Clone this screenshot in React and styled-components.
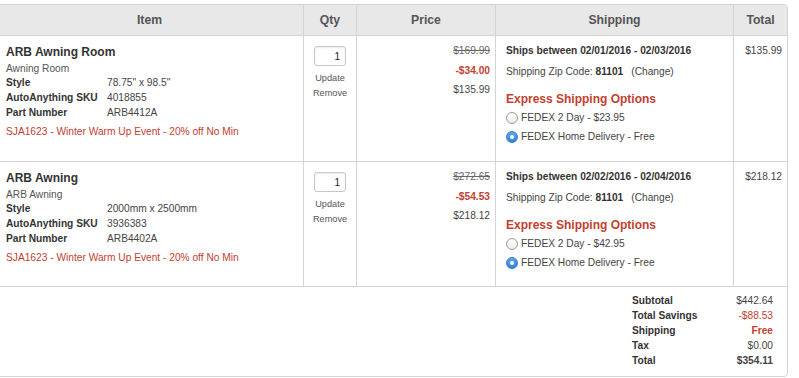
import React from "react";
import styled, { createGlobalStyle } from "styled-components";

const Global = createGlobalStyle`
  html, body { margin: 0; padding: 0; background: #fff; }
  body { font-family: "Liberation Sans", Arial, Helvetica, sans-serif; color: #333; }
  * { box-sizing: border-box; }
`;

const RED = "#c4402f";
const LINE = "#d4d4d4";

const Table = styled.div`
  margin: 4px 0 0 -5px;
  width: 793px;
  border: 1px solid ${LINE};
  border-radius: 4px;
  overflow: hidden;
  display: grid;
  grid-template-columns: 308px 53px 139px 238px 53px;
  grid-template-rows: 31px 126px 125px auto;
`;

const HeadCell = styled.div`
  background: #e8e8e8;
  border-bottom: 1px solid ${LINE};
  border-right: ${(p) => (p.$last ? "none" : `1px solid ${LINE}`)};
  display: flex;
  align-items: center;
  justify-content: center;
  font-size: 12.2px;
  font-weight: bold;
  color: #555;
  padding-bottom: 1px;
`;

const Cell = styled.div`
  border-bottom: 1px solid ${LINE};
  border-right: ${(p) => (p.$last ? "none" : `1px solid ${LINE}`)};
  padding: ${(p) => p.$pad || "7px 10px"};
  text-align: ${(p) => p.$align || "left"};
  font-size: 10.2px;
`;

const Title = styled.div`
  font-size: 12px;
  font-weight: bold;
  line-height: 18.5px;
  color: #333;
`;

const Sub = styled.div`
  line-height: 14.7px;
  color: #555;
`;

const Specs = styled.div`
  display: grid;
  grid-template-columns: 101px auto;
  line-height: 14.7px;
`;

const SpecLabel = styled.span`
  font-weight: bold;
  color: #333;
`;

const SpecValue = styled.span`
  color: #444;
`;

const Promo = styled.div`
  margin-top: 3.5px;
  line-height: 15px;
  color: ${RED};
`;

const QtyInput = styled.div`
  margin: 0 auto;
  width: 32px;
  height: 20px;
  border: 1px solid #c8c8c8;
  border-radius: 3px;
  box-shadow: inset 0 1px 2px rgba(0, 0, 0, 0.08);
  font-size: 10px;
  color: #222;
  display: flex;
  align-items: center;
  justify-content: flex-end;
  padding-right: 5px;
`;

const QtyLinks = styled.div`
  margin-top: 5px;
  font-size: 9.2px;
  line-height: 15px;
  color: #555;
  text-align: center;
`;

const PriceLine = styled.div`
  line-height: 19.5px;
  color: ${(p) => (p.$red ? RED : p.$old ? "#666" : "#444")};
  font-weight: ${(p) => (p.$red ? "bold" : "normal")};
  text-decoration: ${(p) => (p.$old ? "line-through" : "none")};
`;

const ShipDates = styled.div`
  font-weight: bold;
  line-height: 16px;
  color: #333;
`;

const Zip = styled.div`
  margin-top: 5px;
  line-height: 16px;
  color: #444;
  b { color: #333; margin-right: 8px; }
`;

const Express = styled.div`
  margin-top: 10px;
  font-size: 12px;
  font-weight: bold;
  line-height: 18px;
  color: ${RED};
`;

const RadioRow = styled.div`
  display: flex;
  align-items: center;
  gap: 3px;
  line-height: 19px;
  color: #444;
`;

const Radio = styled.span`
  width: 12px;
  height: 12px;
  border-radius: 50%;
  flex: none;
  position: relative;
  border: 1px solid ${(p) => (p.$on ? "#2f7fd8" : "#9a9a9a")};
  background: ${(p) =>
    p.$on ? "linear-gradient(#5aa6f0, #2f84dc)" : "linear-gradient(#ffffff, #ececec)"};
  &::after {
    content: "";
    display: ${(p) => (p.$on ? "block" : "none")};
    position: absolute;
    left: 3px;
    top: 3px;
    width: 4px;
    height: 4px;
    border-radius: 50%;
    background: #fff;
  }
`;

const TotalText = styled.div`
  line-height: 16px;
  color: #444;
`;

const Summary = styled.div`
  grid-column: 1 / -1;
  display: flex;
  justify-content: flex-end;
  padding: 6px 14px 8px 0;
`;

const SumGrid = styled.div`
  display: grid;
  grid-template-columns: 100px 41px;
  font-size: 10.2px;
  line-height: 15px;
`;

const SumLabel = styled.span`
  font-weight: bold;
  color: #333;
`;

const SumValue = styled.span`
  text-align: right;
  color: ${(p) => (p.$red ? RED : "#444")};
  font-weight: ${(p) => (p.$bold ? "bold" : "normal")};
`;

const items = [
  {
    title: "ARB Awning Room",
    sub: "Awning Room",
    style: '78.75" x 98.5"',
    sku: "4018855",
    part: "ARB4412A",
    old: "$169.99",
    save: "-$34.00",
    price: "$135.99",
    dates: "Ships between 02/01/2016 - 02/03/2016",
    twoDay: "$23.95",
    total: "$135.99",
  },
  {
    title: "ARB Awning",
    sub: "ARB Awning",
    style: "2000mm x 2500mm",
    sku: "3936383",
    part: "ARB4402A",
    old: "$272.65",
    save: "-$54.53",
    price: "$218.12",
    dates: "Ships between 02/02/2016 - 02/04/2016",
    twoDay: "$42.95",
    total: "$218.12",
  },
];

function ItemRow({ it }) {
  return (
    <>
      <Cell $pad="7px 10px">
        <Title>{it.title}</Title>
        <Sub>{it.sub}</Sub>
        <Specs>
          <SpecLabel>Style</SpecLabel>
          <SpecValue>{it.style}</SpecValue>
          <SpecLabel>AutoAnything SKU</SpecLabel>
          <SpecValue>{it.sku}</SpecValue>
          <SpecLabel>Part Number</SpecLabel>
          <SpecValue>{it.part}</SpecValue>
        </Specs>
        <Promo>SJA1623 - Winter Warm Up Event - 20% off No Min</Promo>
      </Cell>
      <Cell $pad="10px 0 0">
        <QtyInput>1</QtyInput>
        <QtyLinks>
          Update
          <br />
          Remove
        </QtyLinks>
      </Cell>
      <Cell $pad="5px 5px 0" $align="right">
        <PriceLine $old>{it.old}</PriceLine>
        <PriceLine $red>{it.save}</PriceLine>
        <PriceLine>{it.price}</PriceLine>
      </Cell>
      <Cell $pad="7px 10px 0">
        <ShipDates>{it.dates}</ShipDates>
        <Zip>
          Shipping Zip Code: <b>81101</b>(Change)
        </Zip>
        <Express>Express Shipping Options</Express>
        <RadioRow>
          <Radio />
          FEDEX 2 Day - {it.twoDay}
        </RadioRow>
        <RadioRow>
          <Radio $on />
          FEDEX Home Delivery - Free
        </RadioRow>
      </Cell>
      <Cell $last $pad="7px 5px 0" $align="right">
        <TotalText>{it.total}</TotalText>
      </Cell>
    </>
  );
}

export default function App() {
  return (
    <>
      <Global />
      <Table>
        <HeadCell>Item</HeadCell>
        <HeadCell>Qty</HeadCell>
        <HeadCell>Price</HeadCell>
        <HeadCell>Shipping</HeadCell>
        <HeadCell $last>Total</HeadCell>
        {items.map((it) => (
          <ItemRow key={it.sku} it={it} />
        ))}
        <Summary>
          <SumGrid>
            <SumLabel>Subtotal</SumLabel>
            <SumValue>$442.64</SumValue>
            <SumLabel>Total Savings</SumLabel>
            <SumValue $red>-$88.53</SumValue>
            <SumLabel>Shipping</SumLabel>
            <SumValue $red $bold>Free</SumValue>
            <SumLabel>Tax</SumLabel>
            <SumValue>$0.00</SumValue>
            <SumLabel>Total</SumLabel>
            <SumValue $bold>$354.11</SumValue>
          </SumGrid>
        </Summary>
      </Table>
    </>
  );
}
